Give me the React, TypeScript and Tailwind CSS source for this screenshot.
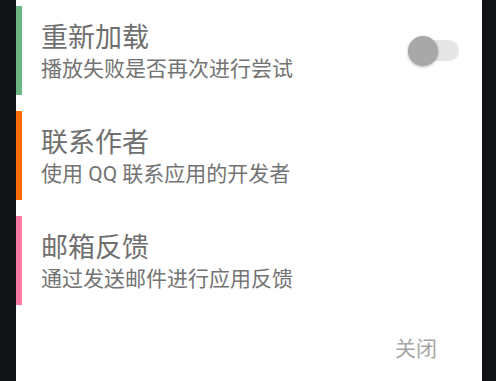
import React from "react";

const items = [
  { title: "重新加载", sub: "播放失败是否再次进行尝试", bar: "bg-[#6cb585]", toggle: true },
  { title: "联系作者", sub: "使用 QQ 联系应用的开发者", bar: "bg-[#ff6d00]", toggle: false },
  { title: "邮箱反馈", sub: "通过发送邮件进行应用反馈", bar: "bg-[#ff7aa0]", toggle: false },
];

export default function App() {
  return (
    <div
      className="w-[496px] h-[381px] bg-[#111317] flex overflow-hidden"
      style={{ fontFamily: 'Roboto, "Noto Sans CJK SC", sans-serif' }}
    >
      <div className="ml-[16px] w-[466px] h-full bg-white flex flex-col pt-[6px]">
        <div className="flex flex-col gap-[16px]">
          {items.map((it) => (
            <div key={it.title} className="flex h-[89px] items-center">
              <div className={`w-[6px] h-full ${it.bar}`} />
              <div className="flex-1 flex items-center pl-[19px] pr-[23px]">
                <div className="flex-1 flex flex-col pt-[3px]">
                  <div className="text-[27px] leading-[34px] text-[#6f6f6f]">{it.title}</div>
                  <div className="text-[21px] leading-[28px] text-[#737373]">{it.sub}</div>
                </div>
                {it.toggle && (
                  <div className="relative w-[51px] h-[30px] flex items-center">
                    <div className="w-[51px] h-[21px] rounded-full bg-[#e6e6e6]" />
                    <div className="absolute left-0 top-0 w-[30px] h-[30px] rounded-full bg-[#a8a8a8] shadow-[0_1px_3px_rgba(0,0,0,0.3)]" />
                  </div>
                )}
              </div>
            </div>
          ))}
        </div>
        <div className="flex justify-end pr-[45px] mt-[30px]">
          <span className="text-[21px] leading-[28px] text-[#a6a6a6]">关闭</span>
        </div>
      </div>
    </div>
  );
}
